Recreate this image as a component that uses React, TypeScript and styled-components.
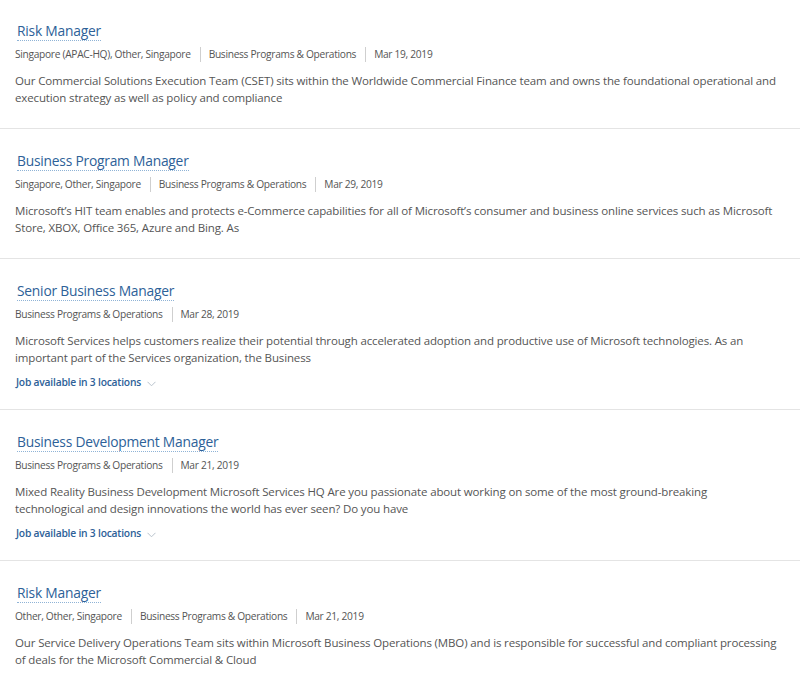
import React from 'react';
import styled, { createGlobalStyle } from 'styled-components';

interface Job {
  title: string;
  meta: string[];
  description: string;
  locations?: number;
}

const jobs: Job[] = [
  {
    title: 'Risk Manager',
    meta: ['Singapore (APAC-HQ), Other, Singapore', 'Business Programs & Operations', 'Mar 19, 2019'],
    description:
      'Our Commercial Solutions Execution Team (CSET) sits within the Worldwide Commercial Finance team and owns the foundational operational and execution strategy as well as policy and compliance',
  },
  {
    title: 'Business Program Manager',
    meta: ['Singapore, Other, Singapore', 'Business Programs & Operations', 'Mar 29, 2019'],
    description:
      'Microsoft\u2019s HIT team enables and protects e-Commerce capabilities for all of Microsoft\u2019s consumer and business online services such as Microsoft Store, XBOX, Office 365, Azure and Bing. As',
  },
  {
    title: 'Senior Business Manager',
    meta: ['Business Programs & Operations', 'Mar 28, 2019'],
    description:
      'Microsoft Services helps customers realize their potential through accelerated adoption and productive use of Microsoft technologies. As an important part of the Services organization, the Business',
    locations: 3,
  },
  {
    title: 'Business Development Manager',
    meta: ['Business Programs & Operations', 'Mar 21, 2019'],
    description:
      'Mixed Reality Business Development Microsoft Services HQ Are you passionate about working on some of the most ground-breaking technological and design innovations the world has ever seen? Do you have',
    locations: 3,
  },
  {
    title: 'Risk Manager',
    meta: ['Other, Other, Singapore', 'Business Programs & Operations', 'Mar 21, 2019'],
    description:
      'Our Service Delivery Operations Team sits within Microsoft Business Operations (MBO) and is responsible for successful and compliant processing of deals for the Microsoft Commercial & Cloud',
  },
];

const GlobalStyle = createGlobalStyle`
  body {
    margin: 0;
    background: #ffffff;
    font-family: "Open Sans", "Liberation Sans", sans-serif;
  }
`;

const List = styled.ul`
  list-style: none;
  margin: 0;
  padding: 0;
  width: 800px;
`;

const Item = styled.li`
  padding: 20px 22px 22px 15px;
  border-bottom: 1px solid #e4e4e4;

  &:first-child {
    padding-top: 19px;
  }
`;

const Title = styled.a`
  display: inline-block;
  margin-left: 2px;
  font-size: 13.8px;
  line-height: 19px;
  color: #2d6198;
  text-decoration: none;
  border-bottom: 1px dotted #8fb3d6;
  letter-spacing: -0.22px;
`;

const Meta = styled.div`
  display: flex;
  align-items: center;
  margin-top: 6px;
  font-size: 10.2px;
  line-height: 18px;
  color: #555555;
  letter-spacing: -0.3px;
`;

const MetaPart = styled.span`
  padding: 0 9px 0 8px;
  border-left: 1px solid #cfcfcf;
  line-height: 15px;

  &:first-child {
    padding-left: 0;
    border-left: none;
  }
`;

const Description = styled.p`
  margin: 10px 0 0;
  font-size: 11.5px;
  line-height: 17px;
  color: #555555;
  letter-spacing: -0.14px;
`;

const Locations = styled.button`
  display: flex;
  align-items: center;
  gap: 6px;
  margin: 9px 0 -2px 1px;
  padding: 0;
  border: none;
  background: none;
  font-family: inherit;
  font-size: 10.3px;
  font-weight: 600;
  line-height: 14px;
  color: #2d6198;
  letter-spacing: -0.22px;
  cursor: pointer;
`;

const Chevron = () => (
  <svg width="9" height="6" viewBox="0 0 9 6" style={{ marginTop: 4 }}>
    <path d="M0.5 0.8 L4.5 4.8 L8.5 0.8" fill="none" stroke="#b8c2cc" strokeWidth="1" />
  </svg>
);

export default function App() {
  return (
    <>
      <GlobalStyle />
      <List>
        {jobs.map((job, i) => (
          <Item key={i}>
            <Title href="#">{job.title}</Title>
            <Meta>
              {job.meta.map((m, j) => (
                <MetaPart key={j}>{m}</MetaPart>
              ))}
            </Meta>
            <Description>{job.description}</Description>
            {job.locations && (
              <Locations>
                Job available in {job.locations} locations
                <Chevron />
              </Locations>
            )}
          </Item>
        ))}
      </List>
    </>
  );
}
